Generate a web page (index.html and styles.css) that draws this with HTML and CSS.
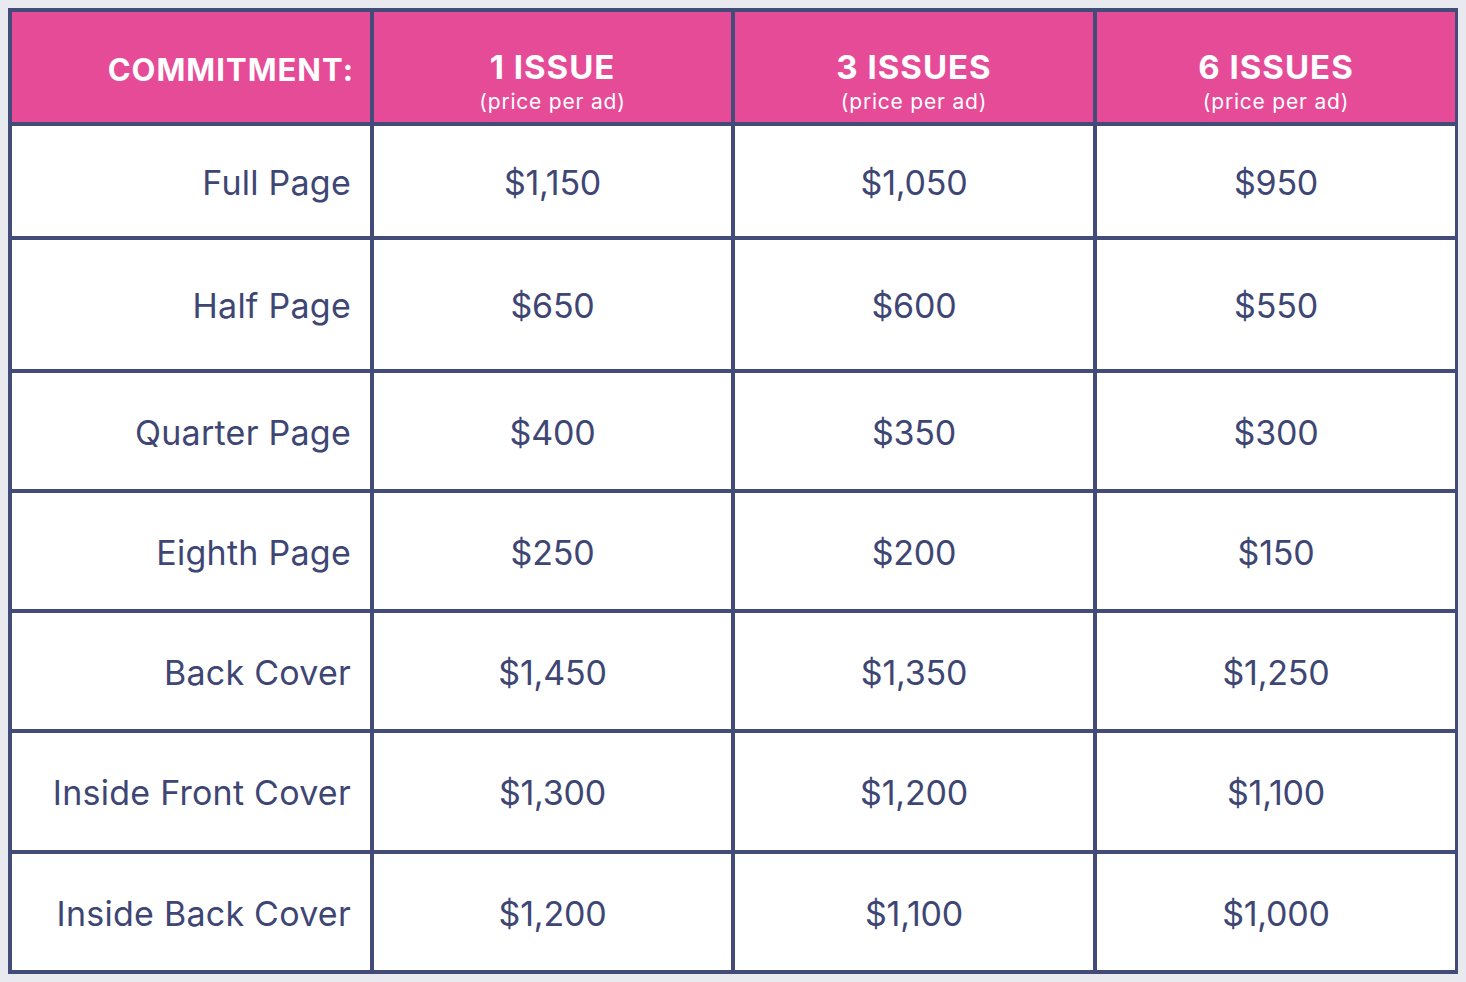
FILE: index.html
```html
<!DOCTYPE html>
<html lang="en">
<head>
<meta charset="utf-8">
<title>Ad Rates</title>
<link rel="stylesheet" href="styles.css">
</head>
<body>
<table class="rates">
  <colgroup>
    <col class="c-a"><col class="c-b"><col class="c-a"><col class="c-a">
  </colgroup>
  <thead>
    <tr class="r-head">
      <th class="label head-label">COMMITMENT:</th>
      <th class="head"><span class="h-main">1 ISSUE</span><span class="h-sub">(price per ad)</span></th>
      <th class="head"><span class="h-main">3 ISSUES</span><span class="h-sub">(price per ad)</span></th>
      <th class="head"><span class="h-main">6 ISSUES</span><span class="h-sub">(price per ad)</span></th>
    </tr>
  </thead>
  <tbody>
    <tr class="r-110"><td class="label">Full Page</td><td>$1,150</td><td>$1,050</td><td>$950</td></tr>
    <tr class="r-129"><td class="label">Half Page</td><td>$650</td><td>$600</td><td>$550</td></tr>
    <tr class="r-116"><td class="label">Quarter Page</td><td>$400</td><td>$350</td><td>$300</td></tr>
    <tr class="r-116"><td class="label">Eighth Page</td><td>$250</td><td>$200</td><td>$150</td></tr>
    <tr class="r-116"><td class="label">Back Cover</td><td>$1,450</td><td>$1,350</td><td>$1,250</td></tr>
    <tr class="r-117"><td class="label">Inside Front Cover</td><td>$1,300</td><td>$1,200</td><td>$1,100</td></tr>
    <tr class="r-116"><td class="label">Inside Back Cover</td><td>$1,200</td><td>$1,100</td><td>$1,000</td></tr>
  </tbody>
</table>
</body>
</html>
```

FILE: styles.css
```css
html, body {
  background: #e9eaef;
}
body {
  margin: 8px;
  font-family: Inter, "Noto Sans", "Liberation Sans", sans-serif;
  color: #3e4674;
}
.rates {
  table-layout: fixed;
  width: 1451px;
  border-collapse: separate;
  border-spacing: 4px;
  background: #434c79;
}
.c-a { width: 358px; }
.c-b { width: 357px; }
.rates th,
.rates td {
  padding: 0;
  padding-top: 2px;
  text-align: center;
  vertical-align: middle;
  background: #ffffff;
  font-size: 34px;
  font-weight: 400;
  letter-spacing: -0.2px;
}
.rates th {
  background: #e64b98;
  color: #ffffff;
}
.rates .label {
  text-align: right;
  padding-right: 19px;
  letter-spacing: 0.25px;
}
.r-head { height: 110px; }
.r-110 { height: 110px; }
.r-129 { height: 129px; }
.r-116 { height: 116px; }
.r-117 { height: 117px; }
.rates .head-label {
  font-weight: 700;
  font-size: 31px;
  letter-spacing: 1px;
  padding-top: 4px;
  padding-right: 16px;
}
.rates th.head {
  vertical-align: top;
  padding-top: 37px;
}
.h-main {
  display: block;
  font-weight: 700;
  font-size: 33px;
  line-height: 36px;
  letter-spacing: 1px;
}
.h-sub {
  display: block;
  margin-top: 6px;
  font-size: 21px;
  line-height: 22px;
  font-weight: 400;
  letter-spacing: 0.8px;
}
```
